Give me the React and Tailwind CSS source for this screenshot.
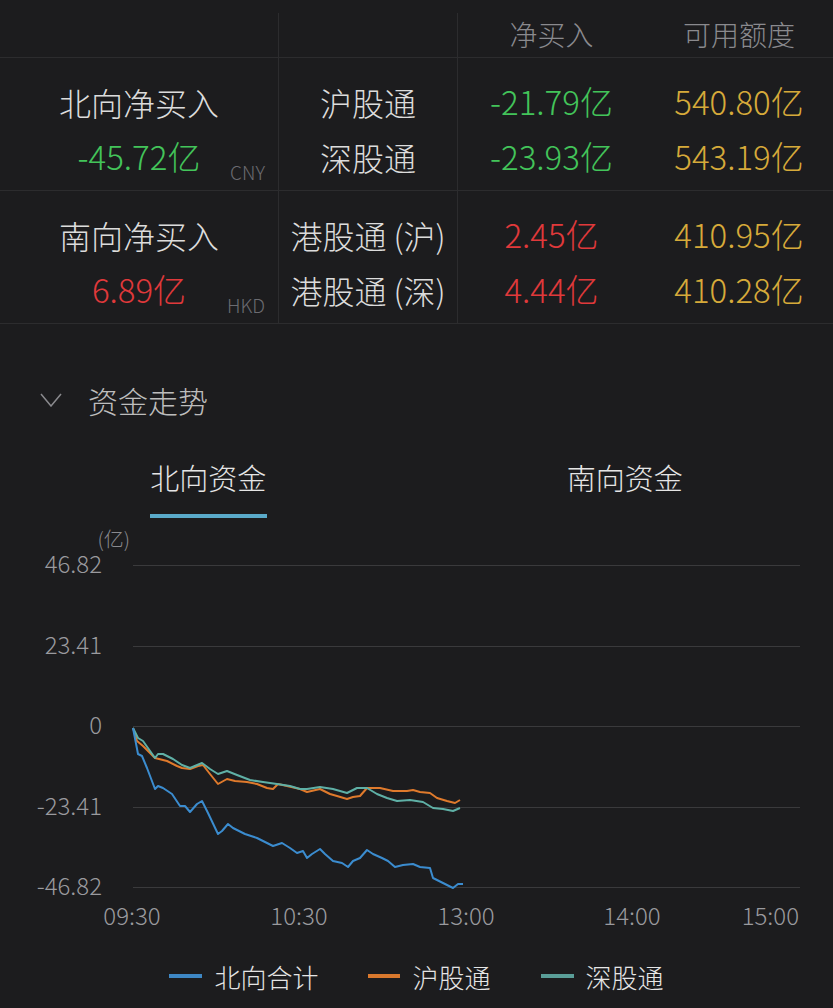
import React from 'react';

const FONT = { fontFamily: '"Noto Sans CJK SC", "Noto Sans", sans-serif' };

const blue = [
  [133, 727], [138, 753], [142, 755], [147, 767], [155, 788], [158, 785], [163, 787], [172, 793],
  [180, 805], [185, 805], [190, 811], [197, 803], [202, 800], [208, 812], [218, 833], [222, 830],
  [228, 823], [233, 827], [245, 833], [257, 837], [267, 842], [273, 845], [282, 842], [290, 847],
  [297, 852], [303, 850], [307, 857], [312, 853], [320, 848], [325, 853], [333, 860], [342, 862],
  [348, 866], [353, 860], [360, 857], [367, 849], [373, 853], [382, 857], [388, 860], [395, 866],
  [403, 864], [413, 863], [420, 866], [430, 867], [433, 877], [443, 882], [453, 887], [458, 883],
  [463, 883],
];

const orange = [
  [133, 727], [137, 740], [143, 745], [155, 757], [167, 760], [177, 765], [182, 767], [190, 768],
  [198, 765], [203, 764], [210, 773], [218, 783], [227, 778], [235, 780], [247, 781], [257, 783],
  [267, 787], [273, 788], [278, 783], [287, 785], [300, 788], [307, 791], [320, 788], [330, 793],
  [337, 795], [347, 798], [353, 796], [360, 795], [367, 787], [380, 787], [393, 790], [407, 790],
  [413, 789], [420, 791], [430, 792], [437, 797], [447, 800], [455, 802], [460, 799],
];

const teal = [
  [133, 727], [138, 737], [143, 740], [155, 757], [158, 753], [163, 753], [173, 758], [182, 764],
  [190, 767], [202, 762], [210, 768], [218, 773], [227, 770], [237, 774], [250, 779], [263, 781],
  [277, 783], [290, 785], [300, 788], [307, 788], [320, 786], [333, 788], [347, 792], [357, 787],
  [367, 787], [377, 793], [387, 797], [397, 800], [410, 799], [423, 801], [433, 807], [443, 808],
  [453, 810], [460, 807],
];

const toPoints = (pts) => pts.map(([x, y]) => `${x},${y}`).join(' ');

const yTicks = [
  { label: '46.82', y: 564 },
  { label: '23.41', y: 645 },
  { label: '0', y: 725 },
  { label: '-23.41', y: 806 },
  { label: '-46.82', y: 886 },
];

function FlowRow({ title, total, totalColor, currency, names, nets, netColor, quotas }) {
  return (
    <div className="grid grid-cols-[278px_179px_188px_188px] h-[133px] border-b border-[#2c2c2e] font-light">
      <div className="relative pt-[16px] text-center">
        <div className="h-[55px] flex items-center justify-center text-[32px] text-[#dcdcdc]">{title}</div>
        <div className={`h-[55px] flex items-center justify-center text-[33px] ${totalColor}`}>{total}</div>
        <span className="absolute right-[13px] top-[100px] text-[19px] text-[#6b6b70]">{currency}</span>
      </div>
      <div className="pt-[16px] border-l border-[#2c2c2e]">
        {names.map((n) => (
          <div key={n} className="h-[55px] flex items-center justify-center text-[32px] text-[#dcdcdc] whitespace-nowrap">{n}</div>
        ))}
      </div>
      <div className="pt-[16px] border-l border-[#2c2c2e]">
        {nets.map((v) => (
          <div key={v} className={`h-[55px] flex items-center justify-center text-[33px] ${netColor}`}>{v}</div>
        ))}
      </div>
      <div className="pt-[16px]">
        {quotas.map((v) => (
          <div key={v} className="h-[55px] flex items-center justify-center text-[33px] text-[#d6aa3a]">{v}</div>
        ))}
      </div>
    </div>
  );
}

export default function App() {
  return (
    <div className="w-[833px] h-[1008px] overflow-hidden bg-[#1c1c1e] text-[#dcdcdc]" style={FONT}>
      {/* header row */}
      <div className="grid grid-cols-[278px_179px_188px_188px] h-[58px] border-b border-[#2c2c2e] font-light">
        <div />
        <div className="mt-[13px] border-l border-[#2c2c2e]" />
        <div className="mt-[13px] border-l border-[#2c2c2e] flex items-center justify-center text-[28px] text-[#8a8a8e] pb-[3px]">净买入</div>
        <div className="mt-[13px] flex items-center justify-center text-[28px] text-[#8a8a8e] pb-[3px]">可用额度</div>
      </div>

      <FlowRow
        title="北向净买入"
        total="-45.72亿"
        totalColor="text-[#43c45a]"
        currency="CNY"
        names={['沪股通', '深股通']}
        nets={['-21.79亿', '-23.93亿']}
        netColor="text-[#43c45a]"
        quotas={['540.80亿', '543.19亿']}
      />
      <FlowRow
        title="南向净买入"
        total="6.89亿"
        totalColor="text-[#e0393b]"
        currency="HKD"
        names={['港股通 (沪)', '港股通 (深)']}
        nets={['2.45亿', '4.44亿']}
        netColor="text-[#e0393b]"
        quotas={['410.95亿', '410.28亿']}
      />

      {/* section title */}
      <div className="mt-[46px] h-[60px] flex items-center pl-[40px] gap-[26px] font-light">
        <svg width="22" height="14" viewBox="0 0 22 14" fill="none" stroke="#8a8a8e" strokeWidth="1.5">
          <path d="M1 1l10 12L21 1" />
        </svg>
        <span className="text-[30px] text-[#bdbdbd]">资金走势</span>
      </div>

      {/* tabs */}
      <div className="flex font-light">
        <div className="flex-1 flex flex-col items-center pt-[31px]">
          <div className="h-[34px] flex items-center text-[29px] text-[#e5e5e5]">北向资金</div>
          <div className="mt-[19px] h-[4px] w-[117px] bg-[#5aaac9]" />
        </div>
        <div className="flex-1 flex flex-col items-center pt-[31px]">
          <div className="h-[34px] flex items-center text-[29px] text-[#e5e5e5]">南向资金</div>
          <div className="mt-[19px] h-[4px]" />
        </div>
      </div>

      {/* chart */}
      <svg width="833" height="423" viewBox="0 517 833 423" className="block font-light" style={FONT}>
        <text x="130" y="546" textAnchor="end" fontSize="20" fill="#8a8a8e">(亿)</text>
        {yTicks.map((t) => (
          <g key={t.label}>
            <line x1="133" x2="800" y1={t.y + 0.5} y2={t.y + 0.5} stroke="#3a3a3c" strokeWidth="1" />
            <text x="102" y={t.y + 8} textAnchor="end" fontSize="24" fill="#9a9a9e">
              {t.label}
            </text>
          </g>
        ))}
        <g fontSize="24" fill="#9a9a9e">
          <text x="132" y="924" textAnchor="middle">09:30</text>
          <text x="299" y="924" textAnchor="middle">10:30</text>
          <text x="466" y="924" textAnchor="middle">13:00</text>
          <text x="632" y="924" textAnchor="middle">14:00</text>
          <text x="799" y="924" textAnchor="end">15:00</text>
        </g>
        <polyline points={toPoints(orange)} fill="none" stroke="#df7a2c" strokeWidth="2" strokeLinejoin="round" />
        <polyline points={toPoints(teal)} fill="none" stroke="#5fb0a6" strokeWidth="2" strokeLinejoin="round" />
        <polyline points={toPoints(blue)} fill="none" stroke="#3b8ccf" strokeWidth="2" strokeLinejoin="round" />
      </svg>

      {/* legend */}
      <div className="mt-[15px] h-[40px] flex items-center justify-center gap-[50px] text-[26px] text-[#e5e5e5] font-light">
        <div className="flex items-center gap-[12px]">
          <span className="w-[33px] h-[4px] bg-[#3e87c4]" />
          <span>北向合计</span>
        </div>
        <div className="flex items-center gap-[12px]">
          <span className="w-[32px] h-[4px] bg-[#d9782d]" />
          <span>沪股通</span>
        </div>
        <div className="flex items-center gap-[12px]">
          <span className="w-[33px] h-[4px] bg-[#5a9e98]" />
          <span>深股通</span>
        </div>
      </div>
    </div>
  );
}
